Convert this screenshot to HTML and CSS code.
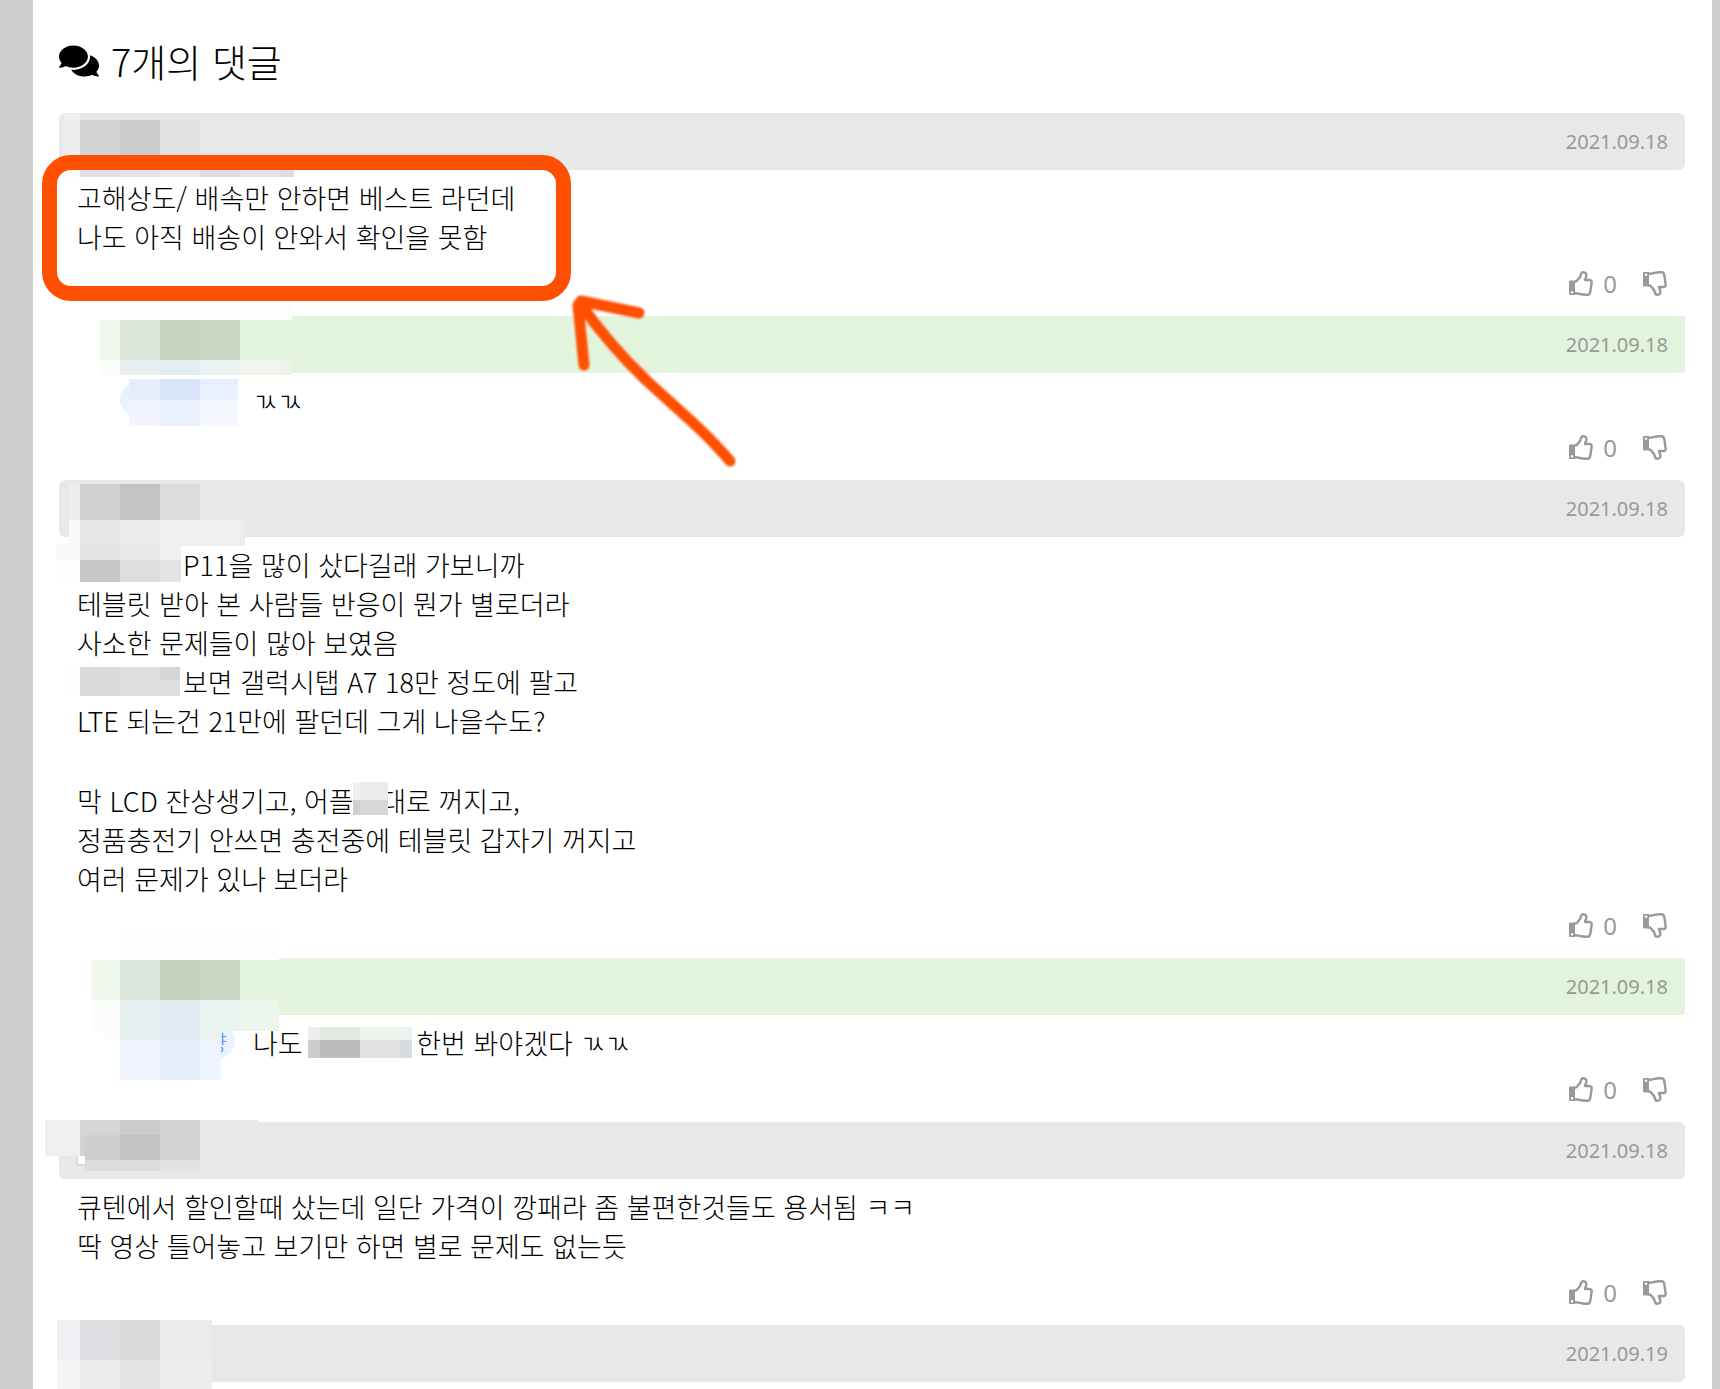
FILE: index.html
```html
<!DOCTYPE html>
<html lang="ko">
<head>
    <meta charset="utf-8">
    <title>댓글</title>
    <link rel="stylesheet" href="styles.css">
</head>
<body>
<!-- 아이콘 -->
<svg class="defs" width="0" height="0" aria-hidden="true">
    <symbol id="thumb" viewBox="0 0 24 25">
        <path fill="currentColor" fill-rule="evenodd" d="M0 10.5Q0 9.5 1 9.5H6V24H1Q0 24 0 23ZM3 20a1.3 1.3 0 1 0 .1 0Z"/>
        <path fill="none" stroke="currentColor" stroke-width="2.4" stroke-linejoin="round" d="M5 10.6H6.5C8.5 10 9.5 7.500 11 6C12 4.800 11.500 1.200 14 1.200C17 1.200 17.800 3 17.200 5.500C16.800 7 16 7.800 16 9H20.500C22.300 9 22.900 10.500 22.600 12L21.500 19.500C21 23 20.500 23.600 18 23.700C12 24 10 22.300 7 22.300H5"/>
    </symbol>
</svg>
<div class="wrap">
    <h2 class="title">
        <svg class="title-icon" viewBox="0 0 576 512" aria-hidden="true"><path d="M416 192c0-88.400-93.100-160-208-160S0 103.600 0 192c0 34.300 14.100 65.900 38 92-13.400 30.200-35.500 54.200-35.800 54.500-2.200 2.300-2.800 5.700-1.500 8.700S4.800 352 8 352c36.600 0 66.900-12.300 88.700-25 32.200 15.700 70.300 25 111.300 25 114.900 0 208-71.600 208-160zm122 220c23.900-26 38-57.700 38-92 0-66.900-53.500-124.200-129.300-148.100.9 6.600 1.300 13.300 1.300 20.100 0 105.900-107.700 192-240 192-10.800 0-21.300-.8-31.700-1.900C207.800 439.600 281.800 480 368 480c41 0 79.100-9.200 111.300-25 21.800 12.700 52.100 25 88.700 25 3.200 0 6.100-1.900 7.300-4.800 1.300-2.900.7-6.300-1.500-8.700-.3-.2-22.400-24.200-35.800-54.500z"/></svg>
        7개의 댓글
    </h2>

    <div class="comment">
        <div class="bar"><time>2021.09.18</time></div>
        <div class="text">
            <p>고해상도/ 배속만 안하면 베스트 라던데<br>나도 아직 배송이 안와서 확인을 못함</p>
        </div>
        <div class="vote">
            <button type="button" aria-label="추천"><svg class="thumb"><use href="#thumb"/></svg><span>0</span></button>
            <button type="button" aria-label="비추천"><svg class="thumb down"><use href="#thumb"/></svg></button>
        </div>
        <svg class="mosaic" width="300" height="80" aria-hidden="true">
            <rect x="5" y="1" width="16" height="6" fill="#f0f0f0"/>
            <rect x="5" y="7" width="16" height="50" fill="#eceef0"/>
            <rect x="21" y="7" width="40" height="40" fill="#d4d4d4"/>
            <rect x="61" y="7" width="40" height="40" fill="#cbcbcb"/>
            <rect x="101" y="7" width="40" height="40" fill="#e0e0e0"/>
            <rect x="0" y="57" width="21" height="7" fill="#fcfcfc"/>
            <rect x="21" y="57" width="40" height="7" fill="#e1e1e1"/>
            <rect x="61" y="57" width="40" height="7" fill="#e4e4e4"/>
            <rect x="101" y="57" width="40" height="7" fill="#ebebeb"/>
            <rect x="141" y="57" width="40" height="7" fill="#dddddd"/>
            <rect x="181" y="57" width="40" height="7" fill="#e4e4e4"/>
            <rect x="221" y="57" width="14" height="7" fill="#dddddd"/>
        </svg>
        <!-- 강조 표시 -->
        <div class="mark"></div>
        <svg class="arrow" width="180" height="190" viewBox="0 0 180 190" aria-hidden="true">
            <path d="M79 33L21 21L18 25L24 85M20 23C40 52 65 80 87 101L130 140Q152 160 170 181"/>
        </svg>
    </div>

    <div class="comment reply">
        <div class="bar"><time>2021.09.18</time></div>
        <div class="text">
            <p><span class="mention"></span>ㄳㄳ</p>
        </div>
        <div class="vote">
            <button type="button" aria-label="추천"><svg class="thumb"><use href="#thumb"/></svg><span>0</span></button>
            <button type="button" aria-label="비추천"><svg class="thumb down"><use href="#thumb"/></svg></button>
        </div>
        <svg class="mosaic" width="200" height="120" aria-hidden="true">
            <rect x="-2" y="0" width="20" height="4" fill="#ffffff"/>
            <rect x="18" y="-12" width="172" height="16" fill="#fcfefb"/>
            <rect x="-2" y="4" width="20" height="40" fill="#f1f9ee"/>
            <rect x="18" y="4" width="40" height="40" fill="#dae4d9"/>
            <rect x="58" y="4" width="40" height="40" fill="#c7d5c0"/>
            <rect x="98" y="4" width="40" height="40" fill="#cad7c4"/>
            <rect x="-2" y="44" width="20" height="15" fill="#fafdf9"/>
            <rect x="18" y="44" width="40" height="15" fill="#e8f0f1"/>
            <rect x="58" y="44" width="40" height="15" fill="#e2edf2"/>
            <rect x="98" y="44" width="40" height="15" fill="#e9f3f2"/>
            <rect x="138" y="44" width="40" height="15" fill="#f0f5ee"/>
            <rect x="178" y="44" width="12" height="15" fill="#edf2ea"/>
            <rect x="27" y="63" width="31" height="21" fill="#e6edfd"/>
            <rect x="58" y="63" width="40" height="21" fill="#d8e3fc"/>
            <rect x="98" y="63" width="38" height="21" fill="#e8effe"/>
            <rect x="27" y="84" width="31" height="26" fill="#f2f5fe"/>
            <rect x="58" y="84" width="40" height="26" fill="#eaf1fd"/>
            <rect x="98" y="84" width="38" height="26" fill="#f4f7fe"/>
        </svg>
    </div>

    <div class="comment">
        <div class="bar"><time>2021.09.18</time></div>
        <div class="text">
            <p><span class="hidden-word"></span>P11을 많이 샀다길래 가보니까<br>테블릿 받아 본 사람들 반응이 뭔가 별로더라<br>사소한 문제들이 많아 보였음<br><span class="hidden-word"></span>보면 갤럭시탭 A7 18만 정도에 팔고<br>LTE 되는건 21만에 팔던데 그게 나을수도?</p>
            <p>막 LCD 잔상생기고, 어플 <span class="hidden-word short"></span>대로 꺼지고,<br>정품충전기 안쓰면 충전중에 테블릿 갑자기 꺼지고<br>여러 문제가 있나 보더라</p>
        </div>
        <div class="vote">
            <button type="button" aria-label="추천"><svg class="thumb"><use href="#thumb"/></svg><span>0</span></button>
            <button type="button" aria-label="비추천"><svg class="thumb down"><use href="#thumb"/></svg></button>
        </div>
        <svg class="mosaic" width="340" height="340" aria-hidden="true">
            <rect x="10" y="4" width="11" height="36" fill="#ebeeed"/>
            <rect x="21" y="4" width="40" height="36" fill="#d0d2d1"/>
            <rect x="61" y="4" width="40" height="36" fill="#c5c4c2"/>
            <rect x="101" y="4" width="40" height="36" fill="#dcdcdc"/>
            <rect x="10" y="40" width="11" height="26" fill="#f9f9f9"/>
            <rect x="21" y="40" width="40" height="26" fill="#e7e7e7"/>
            <rect x="61" y="40" width="40" height="26" fill="#ebebeb"/>
            <rect x="101" y="40" width="40" height="26" fill="#f0f0f0"/>
            <rect x="141" y="40" width="40" height="26" fill="#efefef"/>
            <rect x="181" y="40" width="5" height="26" fill="#ececec"/>
            <rect x="-3" y="64" width="24" height="16" fill="#fafafa"/>
            <rect x="21" y="64" width="40" height="16" fill="#e4e4e4"/>
            <rect x="61" y="64" width="40" height="16" fill="#e9e9e9"/>
            <rect x="101" y="64" width="21" height="16" fill="#f0f0f0"/>
            <rect x="-3" y="80" width="24" height="22" fill="#fefefc"/>
            <rect x="21" y="80" width="40" height="22" fill="#c8c8c8"/>
            <rect x="61" y="80" width="40" height="22" fill="#dedede"/>
            <rect x="101" y="80" width="21" height="22" fill="#e4e4e4"/>
            <rect x="6" y="187" width="15" height="29" fill="#fdfdfd"/>
            <rect x="21" y="187" width="40" height="29" fill="#dadada"/>
            <rect x="61" y="187" width="60" height="29" fill="#dfdfdf"/>
            <rect x="101" y="187" width="20" height="13" fill="#d5d5d5"/>
            <rect x="294" y="302" width="7" height="18" fill="#f0f0f0"/>
            <rect x="301" y="302" width="28" height="18" fill="#ebebeb"/>
            <rect x="294" y="320" width="7" height="15" fill="#cfcfcf"/>
            <rect x="301" y="320" width="28" height="15" fill="#d8d8d8"/>
        </svg>
    </div>

    <div class="comment reply">
        <div class="bar"><time>2021.09.18</time></div>
        <div class="text">
            <p><span class="mention">양</span>나도 <span class="hidden-word"></span>한번 봐야겠다 ㄳㄳ</p>
        </div>
        <div class="vote">
            <button type="button" aria-label="추천"><svg class="thumb"><use href="#thumb"/></svg><span>0</span></button>
            <button type="button" aria-label="비추천"><svg class="thumb down"><use href="#thumb"/></svg></button>
        </div>
        <svg class="mosaic" width="320" height="130" aria-hidden="true">
            <rect x="-11" y="0" width="29" height="2" fill="#ffffff"/>
            <rect x="18" y="-25" width="159" height="27" fill="#fefefc"/>
            <rect x="-11" y="2" width="29" height="40" fill="#f1f9ee"/>
            <rect x="18" y="2" width="40" height="40" fill="#dae5db"/>
            <rect x="58" y="2" width="40" height="40" fill="#c6d4bf"/>
            <rect x="98" y="2" width="40" height="40" fill="#c9d8c3"/>
            <rect x="-11" y="42" width="29" height="31" fill="#fafdf9"/>
            <rect x="2" y="73" width="16" height="9" fill="#fafdf9"/>
            <rect x="18" y="42" width="40" height="40" fill="#e7f0f0"/>
            <rect x="58" y="42" width="40" height="40" fill="#e0ebf2"/>
            <rect x="98" y="42" width="40" height="31" fill="#e8f2f1"/>
            <rect x="98" y="73" width="21" height="9" fill="#e8f2f1"/>
            <rect x="138" y="42" width="39" height="31" fill="#edf6ed"/>
            <rect x="18" y="82" width="40" height="40" fill="#eff4ff"/>
            <rect x="58" y="82" width="40" height="40" fill="#e7effd"/>
            <rect x="98" y="82" width="21" height="40" fill="#eff5ff"/>
            <rect x="206" y="69" width="12" height="13" fill="#e9efe8"/>
            <rect x="218" y="69" width="40" height="13" fill="#e2e8e1"/>
            <rect x="258" y="69" width="52" height="13" fill="#ecf2ec"/>
            <rect x="206" y="82" width="12" height="18" fill="#cdcdcd"/>
            <rect x="218" y="82" width="40" height="18" fill="#bcbcbc"/>
            <rect x="258" y="82" width="40" height="18" fill="#e0e0e0"/>
            <rect x="298" y="82" width="12" height="18" fill="#d8dcde"/>
        </svg>
    </div>

    <div class="comment">
        <div class="bar"><time>2021.09.18</time></div>
        <div class="text">
            <p>큐텐에서 할인할때 샀는데 일단 가격이 깡패라 좀 불편한것들도 용서됨 ㅋㅋ<br>딱 영상 틀어놓고 보기만 하면 별로 문제도 없는듯</p>
        </div>
        <div class="vote">
            <button type="button" aria-label="추천"><svg class="thumb"><use href="#thumb"/></svg><span>0</span></button>
            <button type="button" aria-label="비추천"><svg class="thumb down"><use href="#thumb"/></svg></button>
        </div>
        <svg class="mosaic" width="200" height="60" aria-hidden="true">
            <rect x="18" y="30" width="14" height="13" rx="1" fill="#ffffff" stroke="#c0c0c0"/>
            <rect x="-14" y="-2" width="35" height="36" fill="#edeff1"/>
            <rect x="21" y="-2" width="40" height="15" fill="#d5d5d5"/>
            <rect x="21" y="13" width="5" height="21" fill="#d3d3d3"/>
            <rect x="61" y="-2" width="40" height="15" fill="#cacbcd"/>
            <rect x="101" y="-2" width="40" height="15" fill="#d3d3d3"/>
            <rect x="141" y="-2" width="58" height="36" fill="#e9e9e9"/>
            <rect x="26" y="13" width="35" height="25" fill="#cfcfcf"/>
            <rect x="61" y="13" width="40" height="25" fill="#c3c3c6"/>
            <rect x="101" y="13" width="40" height="25" fill="#d2d2d2"/>
            <rect x="26" y="38" width="35" height="11" fill="#dcdcd9"/>
            <rect x="61" y="38" width="40" height="11" fill="#dadddc"/>
            <rect x="101" y="38" width="40" height="11" fill="#e2e2e2"/>
        </svg>
    </div>

    <div class="comment">
        <div class="bar"><time>2021.09.19</time></div>
        <svg class="mosaic" width="160" height="64" aria-hidden="true">
            <rect x="-2" y="-5" width="23" height="40" fill="#eef0f3"/>
            <rect x="21" y="-5" width="40" height="40" fill="#dddfe2"/>
            <rect x="61" y="-5" width="40" height="40" fill="#dadada"/>
            <rect x="101" y="-5" width="52" height="40" fill="#eaeaea"/>
            <rect x="-2" y="35" width="23" height="29" fill="#f4f4f4"/>
            <rect x="21" y="35" width="40" height="29" fill="#eaeaea"/>
            <rect x="61" y="35" width="40" height="29" fill="#e3e3e3"/>
            <rect x="101" y="35" width="52" height="29" fill="#eeeeee"/>
        </svg>
    </div>
</div>
</body>
</html>
```

FILE: styles.css
```css
* {
    box-sizing: border-box;
}
body {
    margin: 0;
    background-color: #cfcfcf;
    color: #000;
    font-family: "Noto Sans CJK KR", sans-serif;
    font-weight: 300;
}
.defs {
    position: absolute;
}
.wrap {
    min-height: 100vh;
    margin: 0 8px 0 33px;
    padding: 32px 27px 7px 26px;
    background-color: #fff;
}
.title {
    display: flex;
    align-items: center;
    gap: 12px;
    margin: 0 0 23px;
    font-size: 38px;
    font-weight: 300;
    line-height: 58px;
}
.title-icon {
    width: 40px;
    height: 36px;
}
.comment {
    position: relative;
}
.reply {
    margin-left: 43px;
}
.bar {
    display: flex;
    justify-content: flex-end;
    align-items: center;
    height: 57px;
    padding: 0 17px;
    border-radius: 6px;
    background-color: #e8e8e8;
    color: #999;
    font-family: "Noto Sans", "Noto Sans CJK KR", sans-serif;
    font-size: 20px;
    font-weight: 400;
}
.reply .bar {
    border-radius: 3px;
    background-color: #e2f4dc;
}
.text {
    padding: 8px 18px 0;
    font-size: 27px;
    line-height: 39px;
}
.text p {
    margin: 0;
}
.text p + p {
    margin-top: 41px;
}
.mention {
    display: inline-block;
    width: 115px;
    height: 33px;
    margin: 2px 18px 0 0;
    padding-right: 8px;
    border-radius: 17px;
    background-color: #eaf2fe;
    color: #4c8ef7;
    font-size: 22px;
    line-height: 33px;
    text-align: right;
    vertical-align: top;
}
.hidden-word {
    display: inline-block;
    width: 106px;
}
.hidden-word.short {
    width: 20px;
}
.vote {
    display: flex;
    justify-content: flex-end;
    gap: 26px;
    padding: 7px 18px 13px;
}
.vote button {
    display: flex;
    align-items: center;
    gap: 10px;
    height: 40px;
    padding: 0;
    border: 0;
    background: none;
    color: #999;
    font-family: "Noto Sans", "Noto Sans CJK KR", sans-serif;
    font-size: 24px;
    font-weight: 400;
    cursor: pointer;
}
.thumb {
    width: 24px;
    height: 25px;
}
.down {
    transform: scaleY(-1);
}
.mosaic {
    position: absolute;
    top: 0;
    left: 0;
    overflow: visible;
}
.mark {
    position: absolute;
    top: 42px;
    left: -17px;
    width: 529px;
    height: 146px;
    border: 15px solid #ff4f00;
    border-radius: 29px;
}
.arrow {
    position: absolute;
    top: 167px;
    left: 501px;
    z-index: 1;
    fill: none;
    stroke: #ff4f00;
    stroke-width: 11px;
    stroke-linecap: round;
    stroke-linejoin: round;
    filter: blur(1px);
}
```
